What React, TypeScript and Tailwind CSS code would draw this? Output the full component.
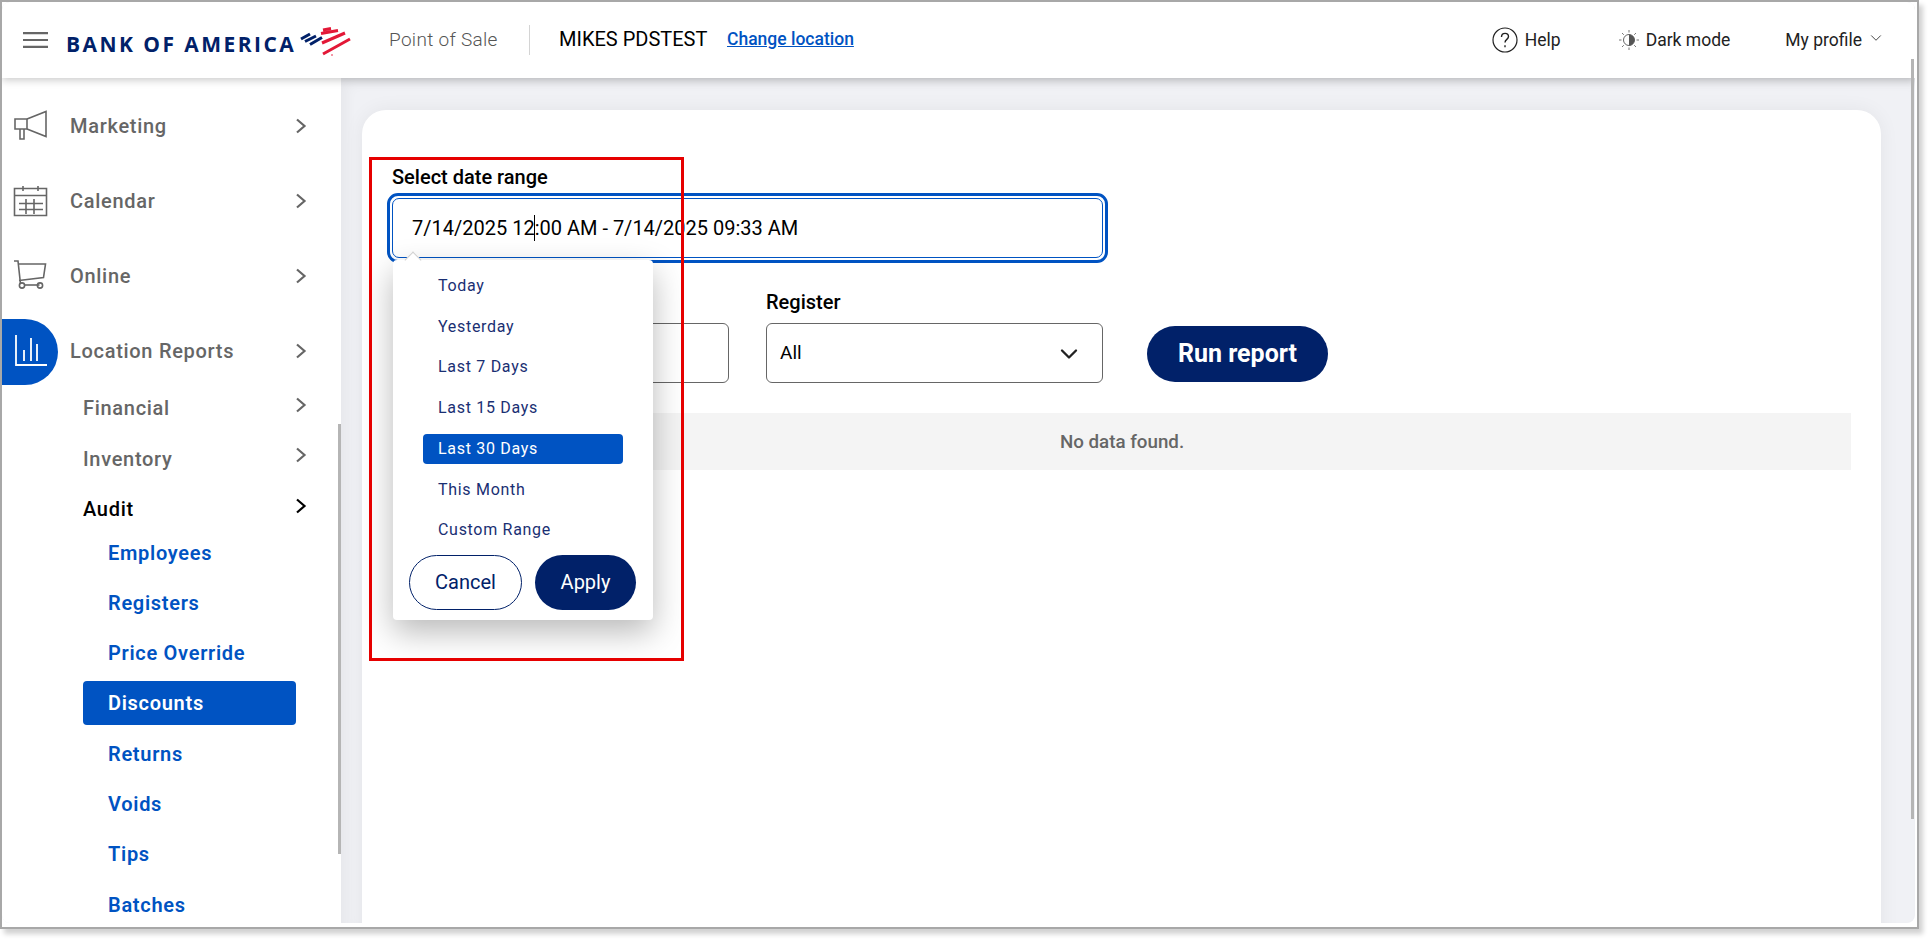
import { ChevronDown } from 'lucide-react';

const navy = '#012169';

function Chevron({ dark }: { dark?: boolean }) {
  return (
    <svg width="12" height="16" viewBox="0 0 12 16" fill="none" className={dark ? 'text-black' : 'text-[#666666]'}>
      <path d="M2 1.5 L9.5 8 L2 14.5" stroke="currentColor" strokeWidth="2.2" />
    </svg>
  );
}

function Megaphone() {
  return (
    <svg width="36" height="32" viewBox="0 0 36 32" fill="none" stroke="#666666" strokeWidth="1.6">
      <path d="M2 9h12v10H2z" />
      <path d="M14 9 33 1.5v25L14 19" />
      <path d="M7 19v10h4V19" />
    </svg>
  );
}

function CalendarIcon() {
  return (
    <svg width="36" height="32" viewBox="0 0 36 32" fill="none" stroke="#666666" strokeWidth="1.6">
      <path d="M1.5 3.5h32v27h-32z" />
      <path d="M1.5 10.5h32" />
      <path d="M10 1v5M25 1v5" />
      <path d="M6 18.5h24M6 24.5h24M13 14v15M21 14v15" />
    </svg>
  );
}

function CartIcon() {
  return (
    <svg width="36" height="32" viewBox="0 0 36 32" fill="none" stroke="#666666" strokeWidth="1.6">
      <path d="M1 1h4l2.5 23" />
      <path d="M5.5 4h27l-2 13.5-24.5 3" />
      <path d="M11.5 25h15" />
      <circle cx="9" cy="25.5" r="2.6" />
      <circle cx="27" cy="25.5" r="2.6" />
    </svg>
  );
}

function ChartIcon() {
  return (
    <svg width="36" height="36" viewBox="0 0 36 36" fill="none" stroke="#ffffff" strokeWidth="1.8">
      <path d="M3 1v30h31" />
      <path d="M11 16v11M18 4v23M24 10v17" />
    </svg>
  );
}

function Flag() {
  return (
    <svg width="64" height="36" viewBox="0 0 64 36" fill="none" strokeWidth="3" className="mt-[1px]">
      <g stroke="#012169">
        <path d="M6 16 15 11M10 18.5 21 13M15 21.5 27 14.5" />
      </g>
      <g stroke="#e31837">
        <path d="M28 7 36 5.5M26 10.5 43 7.5M27 20 50 10M28 31 55 16" />
      </g>
      <circle cx="37" cy="32" r="0.8" fill="#e31837" />
    </svg>
  );
}

function HelpIcon() {
  return (
    <svg width="26" height="26" viewBox="0 0 26 26" fill="none" stroke="#222222" strokeWidth="1.2">
      <circle cx="13" cy="13" r="12" />
      <path d="M9.5 10c0-2.2 1.6-3.6 3.6-3.6s3.4 1.4 3.4 3.2c0 2.8-3.5 2.8-3.5 6" strokeWidth="1.4" />
      <path d="M13 18.2v2" strokeWidth="1.4" />
    </svg>
  );
}

function ContrastIcon() {
  return (
    <svg width="20" height="20" viewBox="0 0 20 20" fill="none">
      <circle cx="10" cy="10" r="5.5" stroke="#666666" strokeWidth="1" />
      <path d="M10 4.5a5.5 5.5 0 0 1 0 11z" fill="#555555" />
      <path
        d="M10 0v2.5M10 17.5V20M0 10h2.5M17.5 10H20M3 3l1.8 1.8M15.2 15.2 17 17M3 17l1.8-1.8M15.2 4.8 17 3"
        stroke="#777777"
        strokeWidth="1"
      />
    </svg>
  );
}

const mainMenu = [
  { label: 'Marketing', icon: <Megaphone /> },
  { label: 'Calendar', icon: <CalendarIcon /> },
  { label: 'Online', icon: <CartIcon /> },
];

const auditMenu = ['Employees', 'Registers', 'Price Override', 'Discounts', 'Returns', 'Voids', 'Tips', 'Batches'];
const ranges = ['Today', 'Yesterday', 'Last 7 Days', 'Last 15 Days', 'Last 30 Days', 'This Month', 'Custom Range'];

function Sidebar() {
  return (
    <aside className="w-[339px] h-full shrink-0 bg-white pt-[10px] overflow-hidden relative z-[5] text-[20px] font-medium tracking-[0.7px]">
      {mainMenu.map((item) => (
        <div key={item.label} className="flex items-center h-[75px] pr-[34px]">
          <div className="w-[68px] pl-[11px] mt-[1px]">{item.icon}</div>
          <span className="text-[#666666] flex-1">{item.label}</span>
          <Chevron />
        </div>
      ))}
      <div className="flex items-center h-[75px] pr-[34px]">
        <div className="w-[56px] h-[66px] mt-[2px] bg-[#0053c2] rounded-r-[33px] flex items-center pl-[11px] mr-[12px]">
          <ChartIcon />
        </div>
        <span className="text-[#666666] flex-1">Location Reports</span>
        <Chevron />
      </div>
      <div className="pl-[81px] pr-[34px] -mt-[5px]">
        {['Financial', 'Inventory', 'Audit'].map((label) => (
          <div key={label} className="flex items-center h-[50.5px]">
            <span className={label === 'Audit' ? 'text-black flex-1' : 'text-[#666666] flex-1'}>{label}</span>
            <div className="-mt-[7px]">
              <Chevron dark={label === 'Audit'} />
            </div>
          </div>
        ))}
      </div>
      <div className="flex flex-col pl-[81px] pr-[45px] -mt-[7px] font-semibold">
        {auditMenu.map((label) => (
          <div
            key={label}
            className={
              label === 'Discounts'
                ? 'flex items-center h-[44px] my-[3.15px] pl-[25px] rounded-[4px] bg-[#0053c2] text-white'
                : 'flex items-center h-[44px] my-[3.15px] pl-[25px] text-[#0053c2]'
            }
          >
            {label}
          </div>
        ))}
      </div>
      <div className="absolute right-0 top-[346px] w-[3px] h-[430px] bg-[#b5b5b5]" />
    </aside>
  );
}

function RangePicker() {
  return (
    <div className="absolute left-[31px] top-[150px] w-[260px] h-[360px] bg-white rounded-[4px] shadow-[0_12px_32px_rgba(0,0,0,0.28)] pt-[5.5px] z-10 flex flex-col">
      <div className="absolute left-[14px] -top-[6px] w-[12px] h-[12px] rotate-45 bg-white border-l border-t border-[#d0d0d0]" />
      {ranges.map((range) => (
        <div
          key={range}
          className={
            range === 'Last 30 Days'
              ? 'relative h-[30.75px] my-[5px] mx-[30px] pl-[15px] flex items-center rounded-[4px] bg-[#0053c2] text-white text-[16px] tracking-[0.7px]'
              : 'relative h-[30.75px] my-[5px] mx-[30px] pl-[15px] flex items-center text-[#1a2f73] text-[16px] tracking-[0.7px]'
          }
        >
          {range}
        </div>
      ))}
      <div className="flex gap-[13px] pl-[16px] mt-[4px]">
        <button className="w-[113px] h-[55px] rounded-full border border-[#012169] bg-white text-[#012169] text-[20px]">Cancel</button>
        <button className="w-[101px] h-[55px] rounded-full bg-[#012169] text-white text-[20px]">Apply</button>
      </div>
    </div>
  );
}

export default function App() {
  return (
    <div className="w-[1931px] h-[942px] bg-white overflow-hidden font-['Roboto',sans-serif]">
      <div className="w-[1919px] h-[929px] border-2 border-[#a8a8a8] bg-white pr-[2px] pb-[4px] shadow-[4px_5px_5px_rgba(0,0,0,0.18)]">
        <div className="relative w-full h-full rounded-[8px] overflow-hidden bg-[#f0f1f5] flex flex-col">
          <header className="relative z-20 h-[76px] shrink-0 bg-white flex items-center pl-[21px] pr-[30px] shadow-[0_2px_8px_rgba(0,0,0,0.22)]">
            <svg width="25" height="16" viewBox="0 0 25 16" className="text-[#666666]" fill="currentColor">
              <path d="M0 0h25v2.2H0zM0 6.9h25v2.2H0zM0 13.8h25V16H0z" />
            </svg>
            <span
              className="ml-[18px] w-[229px] mt-[9px] whitespace-nowrap font-['Open_Sans',sans-serif] font-bold text-[21px] tracking-[2.45px] leading-none"
              style={{ color: navy }}
            >
              BANK OF AMERICA
            </span>
            <Flag />
            <span className="ml-[30px] w-[107px] whitespace-nowrap text-[19px] font-light tracking-[0.3px] text-[#555555]">Point of Sale</span>
            <div className="ml-[33px] w-px h-[30px] bg-[#d4d4d4]" />
            <span className="ml-[29px] w-[151px] whitespace-nowrap text-[20px] text-black -mt-[2px]">MIKES PDSTEST</span>
            <a className="ml-[17px] text-[17.5px] font-medium text-[#0053c2] underline -mt-[2px]">Change location</a>
            <div className="ml-auto flex items-center">
              <HelpIcon />
              <span className="ml-[7px] text-[17.5px] text-[#222222]">Help</span>
              <div className="ml-[58px]">
                <ContrastIcon />
              </div>
              <span className="ml-[7px] text-[17.5px] text-[#222222]">Dark mode</span>
              <span className="ml-[55px] text-[17.5px] text-[#222222]">My profile</span>
              <ChevronDown size={18} strokeWidth={1.2} className="ml-[5px] text-[#333333] -mt-[4px]" />
            </div>
          </header>

          <div className="flex flex-1 min-h-0">
            <Sidebar />
            <main className="flex-1 min-w-0 pt-[32px] pl-[21px] pr-[34px] shadow-[inset_6px_6px_12px_rgba(0,0,0,0.04)]">
              <div className="relative w-[1519px] h-[900px] bg-white rounded-t-[24px] pt-[55px] pl-[31px] shadow-[0_0_20px_rgba(0,0,0,0.06)]">
                <label className="block -ml-[1px] text-[20px] leading-[24px] font-medium text-black h-[28px]">Select date range</label>
                <div className="-ml-[6px] w-[721px] h-[70px] border-[3px] border-[#0053c2] rounded-[11px] p-[2px]">
                  <div className="h-full border border-[#0053c2] rounded-[7px] flex items-center pl-[19px] text-[20px] text-black whitespace-nowrap">
                    7/14/2025 12<span className="inline-block w-px h-[26px] bg-black -mx-[0.5px]" />:00 AM - 7/14/2025 09:33 AM
                  </div>
                </div>
                <div className="flex mt-[27px] items-end">
                  <div className="w-[336px]">
                    <div className="h-[33px]" />
                    <div className="h-[60px] border border-[#666666] rounded-[6px]" />
                  </div>
                  <div className="w-[337px] ml-[37px]">
                    <div className="h-[33px] text-[20px] leading-[24px] font-medium text-black">Register</div>
                    <div className="h-[60px] border border-[#666666] rounded-[6px] flex items-center justify-between pl-[13px] pr-[19px] text-[19px] text-black">
                      <span>All</span>
                      <ChevronDown size={28} strokeWidth={2} className="mt-[2px] text-[#222222]" />
                    </div>
                  </div>
                  <button className="ml-[44px] mb-[1px] w-[181px] h-[56px] rounded-full bg-[#012169] text-white text-[25px] font-bold">Run report</button>
                </div>
                <div className="mt-[30px] w-[1458px] h-[57px] bg-[#f4f4f4] flex items-center justify-center text-[18.75px] font-medium text-[#666666]">
                  <span className="mt-[1px]">No data found.</span>
                </div>

                <RangePicker />
                <div className="absolute left-[7px] top-[47px] w-[315px] h-[504px] border-[3px] border-[#e60000] z-20 pointer-events-none" />
              </div>
            </main>
          </div>
          <div className="absolute right-[1px] top-[57px] w-[3px] h-[760px] bg-[#b5b5b5] z-30" />
        </div>
      </div>
    </div>
  );
}
